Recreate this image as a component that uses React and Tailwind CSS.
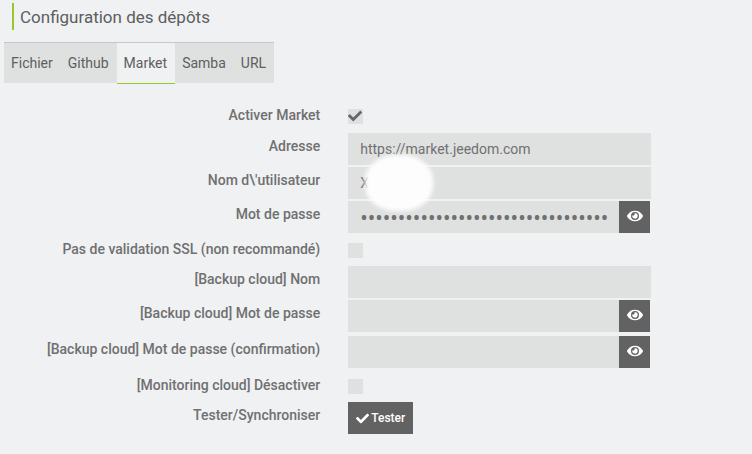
import React, { useState } from 'react';
import { FaCheck, FaEye } from 'react-icons/fa';

const TABS = ['Fichier', 'Github', 'Market', 'Samba', 'URL'];

// One line of the form: label on the left, control on the right
function Row({ id, label, className, labelClass = 'pt-[3px]', children }) {
  return (
    <div className={`flex items-start ${className}`}>
      <label htmlFor={id} className={`w-4/9 shrink-0 pr-3.5 text-right font-medium whitespace-nowrap ${labelClass}`}>
        {label}
      </label>
      <div className="w-[44%] px-3.5">{children}</div>
    </div>
  );
}

function CheckRow({ id, label, checked, onChange }) {
  return (
    <Row id={id} label={label} className="h-[31px]" labelClass="pt-1">
      <div className="relative mt-2 size-[15px]">
        <input
          type="checkbox"
          id={id}
          checked={checked}
          onChange={onChange}
          className="block size-[15px] appearance-none bg-[#dfe1e0]"
        />
        {checked && <FaCheck className="pointer-events-none absolute top-0 left-0 size-3.5 text-[#666666]" />}
      </div>
    </Row>
  );
}

function TextRow({ id, label, value, onChange, children }) {
  return (
    <Row id={id} label={label} className="h-[34px]">
      <div className="relative">
        <input
          type="text"
          id={id}
          value={value}
          onChange={onChange}
          className="block h-8 w-full bg-[#dfe1e0] px-3 outline-none"
        />
        {children}
      </div>
    </Row>
  );
}

function PasswordRow({ id, label, value, onChange, className }) {
  const [visible, setVisible] = useState(false);

  return (
    <Row id={id} label={label} className={className}>
      <div className="flex pr-px">
        <input
          type={visible ? 'text' : 'password'}
          id={id}
          value={value}
          onChange={onChange}
          className={`block h-8 min-w-0 flex-1 bg-[#dfe1e0] pl-3 outline-none ${
            visible ? '' : "font-['Noto_Sans',sans-serif] text-xl"
          }`}
        />
        <button
          type="button"
          aria-label="Afficher"
          onClick={() => setVisible(!visible)}
          className="flex h-8 w-[31px] items-center justify-center bg-[#626262] pb-0.5 text-white"
        >
          <FaEye className="size-4" />
        </button>
      </div>
    </Row>
  );
}

function App() {
  const [activeTab, setActiveTab] = useState('Market');
  const [config, setConfig] = useState({
    enabled: true,
    address: 'https://market.jeedom.com',
    username: 'X',
    password: 'abcdefghijklmnopqrstuvwxyz0123456',
    noSsl: false,
    cloudName: '',
    cloudPassword: '',
    cloudConfirm: '',
    noMonitoring: false,
  });

  const setText = (key) => (e) => setConfig({ ...config, [key]: e.target.value });
  const setCheck = (key) => (e) => setConfig({ ...config, [key]: e.target.checked });

  return (
    <div className="min-h-screen bg-[#eff1f3] pt-[3px] font-['Roboto',sans-serif] text-sm text-[#707070]">
      <h1 className="ml-3 h-[27px] border-l-2 border-[#96c927] pl-1.5 text-[17px] leading-7 text-[#5e5e5e]">
        Configuration des dépôts
      </h1>

      {/* Tabs */}
      <div role="tablist" className="mt-3 mb-px ml-1 flex">
        {TABS.map((tab) => (
          <button
            key={tab}
            type="button"
            role="tab"
            aria-selected={tab === activeTab}
            onClick={() => setActiveTab(tab)}
            className="h-[41px] border-t border-[#c6c8c8] bg-[#dfe1e0] pr-2 pl-[7px] text-[#5e5e5e] aria-selected:bg-[#eff1f3] aria-selected:shadow-[0_1px_0_#96c927]"
          >
            {tab}
          </button>
        ))}
      </div>

      {/* Market form */}
      <form className="pt-[17px]" onSubmit={(e) => e.preventDefault()}>
        <div className="mb-px">
          <CheckRow id="enabled" label="Activer Market" checked={config.enabled} onChange={setCheck('enabled')} />
        </div>
        <TextRow id="address" label="Adresse" value={config.address} onChange={setText('address')} />
        <TextRow id="username" label="Nom d\'utilisateur" value={config.username} onChange={setText('username')}>
          {/* White smudge hiding the user name */}
          <div className="pointer-events-none absolute -top-3 left-[17px] z-10 h-14 w-[68px] rounded-[45%] bg-[#fdfdfd] blur-[2px]" />
        </TextRow>
        <PasswordRow
          id="password"
          label="Mot de passe"
          value={config.password}
          onChange={setText('password')}
          className="h-[34px]"
        />
        <CheckRow
          id="noSsl"
          label="Pas de validation SSL (non recommandé)"
          checked={config.noSsl}
          onChange={setCheck('noSsl')}
        />
        <TextRow id="cloudName" label="[Backup cloud] Nom" value={config.cloudName} onChange={setText('cloudName')} />
        <PasswordRow
          id="cloudPassword"
          label="[Backup cloud] Mot de passe"
          value={config.cloudPassword}
          onChange={setText('cloudPassword')}
          className="h-9"
        />
        <PasswordRow
          id="cloudConfirm"
          label="[Backup cloud] Mot de passe (confirmation)"
          value={config.cloudConfirm}
          onChange={setText('cloudConfirm')}
          className="h-[35px]"
        />
        <CheckRow
          id="noMonitoring"
          label="[Monitoring cloud] Désactiver"
          checked={config.noMonitoring}
          onChange={setCheck('noMonitoring')}
        />
        <Row id="test" label="Tester/Synchroniser" className="h-[34px]">
          <button
            type="submit"
            id="test"
            className="flex h-8 items-center gap-0.5 bg-[#626262] px-2 text-xs font-medium text-white"
          >
            <FaCheck className="size-[13px]" />
            Tester
          </button>
        </Row>
      </form>
    </div>
  );
}

export default App;
